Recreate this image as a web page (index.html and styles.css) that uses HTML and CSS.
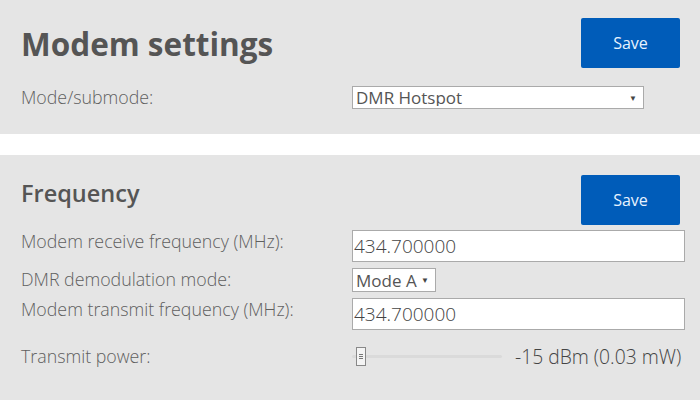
FILE: index.html
```html
<!DOCTYPE html>
<html lang="en">
<head>
  <meta charset="UTF-8" />
  <title>Modem settings</title>
  <link rel="stylesheet" href="styles.css">
</head>
<body>

  <!-- Modem -->
  <div class="panel panel-modem">
    <div class="panel-head">
      <h1>Modem settings</h1>
      <button class="save">Save</button>
    </div>
    <div class="rows">
      <label>Mode/submode:</label>
      <div class="select-wrap wide">
        <select>
          <option>DMR Hotspot</option>
          <option>DMR Repeater</option>
          <option>D-Star Hotspot</option>
        </select>
      </div>
    </div>
  </div>

  <!-- Frequency -->
  <div class="panel panel-freq">
    <div class="panel-head">
      <h2>Frequency</h2>
      <button class="save">Save</button>
    </div>
    <div class="rows">
      <label>Modem receive frequency (MHz):</label>
      <input type="text" class="text" value="434.700000">

      <label>DMR demodulation mode:</label>
      <div class="select-wrap narrow">
        <select>
          <option>Mode A</option>
          <option>Mode B</option>
        </select>
      </div>

      <label>Modem transmit frequency (MHz):</label>
      <input type="text" class="text" value="434.700000">

      <label class="power-label">Transmit power:</label>
      <div class="power">
        <input type="range" min="0" max="100" value="3">
        <span class="power-value">-15 dBm (0.03 mW)</span>
      </div>
    </div>
  </div>

</body>
</html>
```

FILE: styles.css
```css
body {
  font-family: "Open Sans", "Liberation Sans", sans-serif;
  background: #fff;
  margin: 0;
  padding: 0;
  color: #666;
}

.panel {
  background: #e5e5e5;
  padding: 18px 20px 25px 21px;
}
.panel-freq {
  margin-top: 21px;
  padding-top: 20px;
  padding-bottom: 33px;
}

.panel-head {
  display: flex;
  justify-content: space-between;
  align-items: center;
  height: 50px;
}
.panel-head h1 {
  margin: 0;
  font-size: 31.5px;
  font-weight: bold;
  color: #555;
}
.panel-head h2 {
  margin: 0;
  font-size: 23.5px;
  font-weight: 600;
  color: #555;
  align-self: flex-start;
  margin-top: 2px;
}

.save {
  width: 99px;
  height: 50px;
  background-color: #005cb9;
  color: #e8f3ff;
  border: none;
  border-radius: 2px;
  font-family: inherit;
  font-size: 16px;
  cursor: pointer;
}
.save:hover {
  background-color: #004c9a;
}

/* Linhas do formulário */
.rows {
  display: grid;
  grid-template-columns: 331px 1fr;
  row-gap: 6px;
  align-items: start;
  margin-top: 18px;
}
.panel-freq .rows {
  margin-top: 5px;
}
.rows label {
  font-size: 17.8px;
  font-weight: 300;
  line-height: 22px;
  color: #5f5f5f;
}

.select-wrap {
  position: relative;
  background: #fff;
  border: 1px solid #aaa;
  box-sizing: border-box;
}
.select-wrap.wide {
  width: 292px;
  height: 23px;
}
.select-wrap.narrow {
  width: 84px;
  height: 24px;
}
.select-wrap select {
  -webkit-appearance: none;
  appearance: none;
  border: none;
  background: transparent;
  width: 100%;
  height: 100%;
  padding: 0 12px 0 3px;
  font-family: inherit;
  font-size: 17px;
  line-height: 1;
  color: #555;
  outline: none;
}
.select-wrap::after {
  content: "▼";
  position: absolute;
  right: 6px;
  top: 5px;
  font-size: 8px;
  color: #444;
  pointer-events: none;
}

.text {
  width: 333px;
  height: 32px;
  box-sizing: border-box;
  border: 1px solid #aaa;
  background: #fff;
  padding: 0 1px;
  font-family: inherit;
  font-size: 19px;
  font-weight: 300;
  color: #444;
  outline: none;
}

.power-label {
  margin-top: 9px;
}
.power {
  margin-top: 9px;
  display: flex;
  align-items: center;
  height: 22px;
}
.power input[type=range] {
  -webkit-appearance: none;
  appearance: none;
  width: 150px;
  height: 20px;
  margin: 0;
  background: transparent;
}
.power input[type=range]::-webkit-slider-runnable-track {
  height: 3px;
  background: #dadada;
  border-radius: 2px;
}
.power input[type=range]::-webkit-slider-thumb {
  -webkit-appearance: none;
  width: 10px;
  height: 19px;
  margin-top: -8px;
  box-sizing: border-box;
  border: 1px solid #888;
  background:
    linear-gradient(#777, #777) no-repeat 2px 6px / 4px 1px,
    linear-gradient(#777, #777) no-repeat 2px 8px / 4px 1px,
    linear-gradient(#777, #777) no-repeat 2px 10px / 4px 1px,
    #f4f4f4;
}
.power-value {
  margin-left: 13px;
  font-size: 19.3px;
  font-weight: 300;
  color: #444;
}
```
